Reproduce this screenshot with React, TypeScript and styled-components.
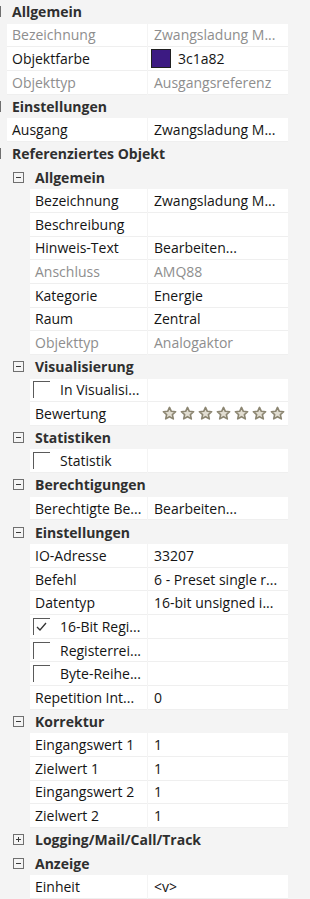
import React from "react";
import styled, { createGlobalStyle } from "styled-components";

const GlobalStyle = createGlobalStyle`
  html, body { margin: 0; padding: 0; background: #f4f4f4; }
  body { font-family: "Open Sans", "Noto Sans", sans-serif; font-size: 14px; color: #141414; }
`;

const ROW_H = 23.66;

const Grid = styled.div`
  width: 310px;
  overflow: hidden;
  background: #f4f4f4;
`;

const Row = styled.div`
  display: flex;
  height: ${ROW_H}px;
  align-items: stretch;
`;

const Indent = styled.div<{ $level: number }>`
  flex: 0 0 ${(p) => 7 + p.$level * 23}px;
`;

const Cell = styled.div<{ $disabled?: boolean }>`
  box-sizing: border-box;
  background: #ffffff;
  border-bottom: 1px solid #efefef;
  display: flex;
  align-items: center;
  white-space: nowrap;
  overflow: hidden;
  color: ${(p) => (p.$disabled ? "#8e8e8e" : "#141414")};
`;

const LabelCell = styled(Cell)<{ $level: number }>`
  flex: 0 0 ${(p) => 140 - p.$level * 23}px;
  padding-left: 5px;
`;

const ValueCell = styled(Cell)`
  flex: 0 0 140px;
  margin-left: 1px;
  padding-left: 6px;
`;

const HeaderRow = styled.div<{ $level: number }>`
  display: flex;
  align-items: center;
  height: ${ROW_H}px;
  padding-left: ${(p) => p.$level * 23}px;
  white-space: nowrap;
`;

const ToggleBox = styled.span`
  box-sizing: border-box;
  flex: 0 0 11px;
  width: 11px;
  height: 11px;
  margin-left: -10px;
  border: 1px solid #6f6f6f;
  position: relative;
  &::before {
    content: "";
    position: absolute;
    left: 2px;
    right: 2px;
    top: 4px;
    height: 1px;
    background: #3a3a3a;
  }
`;

const PlusBox = styled(ToggleBox)`
  &::after {
    content: "";
    position: absolute;
    top: 2px;
    bottom: 2px;
    left: 4px;
    width: 1px;
    background: #3a3a3a;
  }
`;

const HeaderText = styled.span`
  margin-left: 11px;
  font-weight: 700;
  color: #2f2f2f;
`;

const CheckBox = styled.span`
  box-sizing: border-box;
  flex: 0 0 17px;
  height: 17px;
  margin-left: -2px;
  border-top: 1px solid #5a5a5a;
  border-left: 1px solid #5a5a5a;
  display: flex;
  align-items: center;
  padding-left: 2px;
`;

const CheckLabel = styled.span`
  margin-left: 10px;
`;

const Swatch = styled.span`
  box-sizing: border-box;
  width: 20px;
  height: 19px;
  margin-left: -3px;
  background: #3c1a82;
  border: 1px solid #202020;
`;

const SwatchText = styled.span`
  margin-left: 7px;
`;

const Stars = styled.div`
  display: flex;
  gap: 3px;
  margin-left: 8px;
`;

const Star = () => (
  <svg width="15" height="15" viewBox="0 0 24 24">
    <path
      d="M12 2.2l2.9 6.3 6.9.7-5.2 4.6 1.5 6.8L12 17.1l-6.1 3.5 1.5-6.8-5.2-4.6 6.9-.7z"
      fill="#e2ded2"
      stroke="#8c8672"
      strokeWidth="2.6"
      strokeLinejoin="round"
    />
  </svg>
);

type Item =
  | { kind: "header"; level: number; text: string; collapsed?: boolean }
  | {
      kind: "prop";
      level: number;
      label: string;
      value?: string;
      disabled?: boolean;
      swatch?: boolean;
      stars?: boolean;
      check?: boolean;
      checked?: boolean;
    };

const items: Item[] = [
  { kind: "header", level: 0, text: "Allgemein" },
  { kind: "prop", level: 0, label: "Bezeichnung", value: "Zwangsladung M...", disabled: true },
  { kind: "prop", level: 0, label: "Objektfarbe", value: "3c1a82", swatch: true },
  { kind: "prop", level: 0, label: "Objekttyp", value: "Ausgangsreferenz", disabled: true },
  { kind: "header", level: 0, text: "Einstellungen" },
  { kind: "prop", level: 0, label: "Ausgang", value: "Zwangsladung M..." },
  { kind: "header", level: 0, text: "Referenziertes Objekt" },
  { kind: "header", level: 1, text: "Allgemein" },
  { kind: "prop", level: 1, label: "Bezeichnung", value: "Zwangsladung M..." },
  { kind: "prop", level: 1, label: "Beschreibung", value: "" },
  { kind: "prop", level: 1, label: "Hinweis-Text", value: "Bearbeiten..." },
  { kind: "prop", level: 1, label: "Anschluss", value: "AMQ88", disabled: true },
  { kind: "prop", level: 1, label: "Kategorie", value: "Energie" },
  { kind: "prop", level: 1, label: "Raum", value: "Zentral" },
  { kind: "prop", level: 1, label: "Objekttyp", value: "Analogaktor", disabled: true },
  { kind: "header", level: 1, text: "Visualisierung" },
  { kind: "prop", level: 1, label: "In Visualisi...", check: true },
  { kind: "prop", level: 1, label: "Bewertung", stars: true },
  { kind: "header", level: 1, text: "Statistiken" },
  { kind: "prop", level: 1, label: "Statistik", check: true },
  { kind: "header", level: 1, text: "Berechtigungen" },
  { kind: "prop", level: 1, label: "Berechtigte Be...", value: "Bearbeiten..." },
  { kind: "header", level: 1, text: "Einstellungen" },
  { kind: "prop", level: 1, label: "IO-Adresse", value: "33207" },
  { kind: "prop", level: 1, label: "Befehl", value: "6 - Preset single r..." },
  { kind: "prop", level: 1, label: "Datentyp", value: "16-bit unsigned i..." },
  { kind: "prop", level: 1, label: "16-Bit Regi...", check: true, checked: true },
  { kind: "prop", level: 1, label: "Registerrei...", check: true },
  { kind: "prop", level: 1, label: "Byte-Reihe...", check: true },
  { kind: "prop", level: 1, label: "Repetition Int...", value: "0" },
  { kind: "header", level: 1, text: "Korrektur" },
  { kind: "prop", level: 1, label: "Eingangswert 1", value: "1" },
  { kind: "prop", level: 1, label: "Zielwert 1", value: "1" },
  { kind: "prop", level: 1, label: "Eingangswert 2", value: "1" },
  { kind: "prop", level: 1, label: "Zielwert 2", value: "1" },
  { kind: "header", level: 1, text: "Logging/Mail/Call/Track", collapsed: true },
  { kind: "header", level: 1, text: "Anzeige" },
  { kind: "prop", level: 1, label: "Einheit", value: "<v>" },
];

const CheckMark = () => (
  <svg width="11" height="10" viewBox="0 0 11 10">
    <polyline points="1,5 4,8 10,1" fill="none" stroke="#333" strokeWidth="1.3" />
  </svg>
);

export default function App() {
  return (
    <>
      <GlobalStyle />
      <Grid>
        {items.map((it, i) => {
          if (it.kind === "header") {
            return (
              <HeaderRow key={i} $level={it.level}>
                {it.collapsed ? <PlusBox /> : <ToggleBox />}
                <HeaderText>{it.text}</HeaderText>
              </HeaderRow>
            );
          }
          return (
            <Row key={i}>
              <Indent $level={it.level} />
              <LabelCell $level={it.level} $disabled={it.disabled}>
                {it.check ? (
                  <>
                    <CheckBox>{it.checked ? <CheckMark /> : null}</CheckBox>
                    <CheckLabel>{it.label}</CheckLabel>
                  </>
                ) : (
                  it.label
                )}
              </LabelCell>
              <ValueCell $disabled={it.disabled}>
                {it.swatch ? (
                  <>
                    <Swatch />
                    <SwatchText>{it.value}</SwatchText>
                  </>
                ) : it.stars ? (
                  <Stars>
                    {Array.from({ length: 7 }).map((_, k) => (
                      <Star key={k} />
                    ))}
                  </Stars>
                ) : (
                  it.value
                )}
              </ValueCell>
            </Row>
          );
        })}
      </Grid>
    </>
  );
}
